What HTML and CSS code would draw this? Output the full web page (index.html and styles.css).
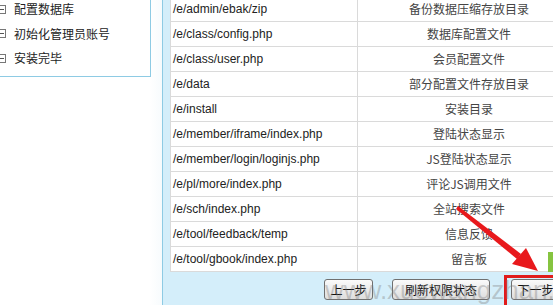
FILE: index.html
```html
<!DOCTYPE html>
<html lang="zh-CN">
<head>
  <meta charset="UTF-8" />
  <title>安装检测 - 目录权限</title>
  <link rel="stylesheet" href="styles.css">
</head>
<body>
  <div class="page">
    <div class="side">
      <ul class="steps">
        <li><span class="ico"></span>配置数据库</li>
        <li><span class="ico"></span>初始化管理员账号</li>
        <li><span class="ico"></span>安装完毕</li>
      </ul>
    </div>

    <div class="main">
      <table class="files">
        <tr><td class="path">/e/admin/ebak/zip</td><td class="desc">备份数据压缩存放目录</td></tr>
        <tr><td class="path">/e/class/config.php</td><td class="desc">数据库配置文件</td></tr>
        <tr><td class="path">/e/class/user.php</td><td class="desc">会员配置文件</td></tr>
        <tr><td class="path">/e/data</td><td class="desc">部分配置文件存放目录</td></tr>
        <tr><td class="path">/e/install</td><td class="desc">安装目录</td></tr>
        <tr><td class="path">/e/member/iframe/index.php</td><td class="desc">登陆状态显示</td></tr>
        <tr><td class="path">/e/member/login/loginjs.php</td><td class="desc">JS登陆状态显示</td></tr>
        <tr><td class="path">/e/pl/more/index.php</td><td class="desc">评论JS调用文件</td></tr>
        <tr><td class="path">/e/sch/index.php</td><td class="desc">全站搜索文件</td></tr>
        <tr><td class="path">/e/tool/feedback/temp</td><td class="desc">信息反馈</td></tr>
        <tr><td class="path">/e/tool/gbook/index.php</td><td class="desc">留言板</td></tr>
      </table>

      <div class="actions">
        <button class="btn btn-short">上一步</button>
        <button class="btn btn-long">刷新权限状态</button>
        <button class="btn btn-short btn-next">下一步</button>
      </div>
    </div>
  </div>

  <!-- annotation drawn over the screenshot -->
  <svg class="arrow" width="553" height="305" viewBox="0 0 553 305">
    <polygon points="456,209 458,206 521,254 517,259" fill="#e8191c"/>
    <polygon points="512,264 526,248 538,271" fill="#e8191c"/>
  </svg>
  <div class="highlight"></div>
  <div class="green-tab"></div>
  <div class="mark">www.xuewangzhan.net</div>
</body>
</html>
```

FILE: styles.css
```css
html, body {
  margin: 0;
  padding: 0;
}
body {
  width: 553px;
  height: 305px;
  overflow: hidden;
  background: #fff;
  font-family: "Liberation Sans", "Noto Sans CJK SC", sans-serif;
  font-size: 12px;
  color: #333;
  position: relative;
}
.page {
  display: flex;
  height: 305px;
}

/* left step list */
.side {
  width: 162px;
  flex: none;
  background: linear-gradient(to right, #fff 150px, #f7fbfd 162px);
}
.steps {
  list-style: none;
  margin: 0 0 0 -10px;
  padding: 0 0 5px 0;
  width: 159px;
  border: 1px solid #8ecbe4;
  border-top: none;
  background: #fff;
  font-family: "Noto Sans CJK SC", sans-serif;
  color: #222;
}
.steps li {
  height: 24.5px;
  line-height: 24px;
  display: flex;
  align-items: center;
}
.steps li:first-child {
  margin-top: -3px;
}
.ico {
  display: inline-block;
  width: 7px;
  height: 7px;
  border: 1px solid #777;
  margin: 0 8px 0 6px;
  position: relative;
}
.ico::after {
  content: "";
  position: absolute;
  left: 1px;
  right: 1px;
  top: 3px;
  height: 1px;
  background: #555;
}

/* right panel */
.main {
  flex: 1;
  border-left: 1px solid #8ecbe4;
  background: #d4eefa;
  display: flex;
  flex-direction: column;
  overflow: hidden;
}
.files {
  margin: -4px 0 0 7px;
  width: 411px;
  border-spacing: 1px;
  background: #dadada;
  flex: none;
}
.files td {
  background: #fff;
  height: 24px;
  padding: 0;
  line-height: 24px;
  white-space: nowrap;
}
.path {
  width: 184px;
  padding-left: 2px !important;
  color: #222;
}
.desc {
  text-align: center;
  color: #444;
  font-family: "Noto Sans CJK SC", sans-serif;
}

.actions {
  display: flex;
  padding: 7px 0 0 161px;
  gap: 19px;
}
.btn {
  height: 21px;
  padding: 0;
  border: 1px solid #707070;
  border-radius: 3px;
  background: linear-gradient(#fafafa, #dedede);
  font-family: "Noto Sans CJK SC", sans-serif;
  font-size: 12px;
  color: #111;
  flex: none;
}
.btn-short {
  width: 49px;
}
.btn-long {
  width: 98px;
}
.btn-next {
  margin-left: 2px;
}

/* overlays */
.arrow {
  position: absolute;
  left: 0;
  top: 0;
  pointer-events: none;
}
.highlight {
  position: absolute;
  left: 504px;
  top: 275px;
  width: 52px;
  height: 40px;
  border: 3px solid #e01b1b;
}
.green-tab {
  position: absolute;
  left: 548px;
  top: 252px;
  width: 6px;
  height: 20px;
  background: #86c440;
}
.mark {
  position: absolute;
  left: 325px;
  top: 275px;
  font-family: "Liberation Sans", sans-serif;
  font-size: 26px;
  color: rgba(120, 120, 120, 0.35);
  white-space: nowrap;
  pointer-events: none;
}
```
